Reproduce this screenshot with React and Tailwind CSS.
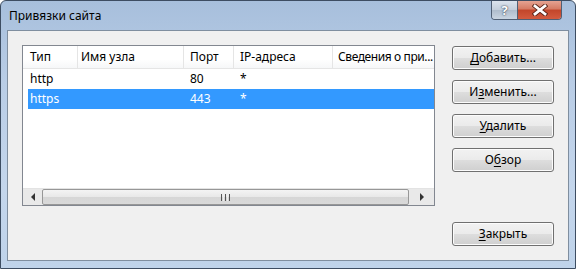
const font = { fontFamily: '"Noto Sans", "Open Sans", sans-serif' };

const cols = [
  { label: "Тип", w: "w-[55px]", pl: "pl-[7px]" },
  { label: "Имя узла", w: "w-[106px]", pl: "pl-[3px]" },
  { label: "Порт", w: "w-[50px]", pl: "pl-[6px]" },
  { label: "IP-адреса", w: "w-[99px]", pl: "pl-[6px]" },
  { label: "Сведения о при...", w: "w-[101px]", pl: "pl-[5px] tracking-[-0.4px]" },
];

const rows = [
  { type: "http", port: "80", ip: "*", selected: false },
  { type: "https", port: "443", ip: "*", selected: true },
];

const Btn = ({ pre, u, post, className = "" }) => (
  <button
    className={`h-[24px] w-[102px] rounded-[3px] border border-[#707070] bg-[linear-gradient(to_bottom,#f2f2f2_0%,#ebebeb_48%,#dddddd_52%,#cfcfcf_100%)] text-[12px] text-black shadow-[inset_0_0_0_1px_#fcfcfc] flex items-center justify-center ${className}`}
  >
    <span>
      {pre}
      <span className="underline underline-offset-2">{u}</span>
      {post}
    </span>
  </button>
);

const TitleBar = () => (
  <div className="h-[29px] flex items-start justify-between">
    <div className="pl-[8px] pt-[7px] text-[12px] text-black leading-[16px]">Привязки сайта</div>
    <div className="flex mr-[13px] border border-t-0 border-[#4f5f74] rounded-b-[4px] overflow-hidden h-[19px]">
      <div className="w-[26px] h-full bg-[linear-gradient(to_bottom,#dbe3ed_0%,#c3cedb_50%,#aebccc_51%,#c9d5e2_100%)] border-r border-[#4f5f74] flex items-center justify-center text-[13px] font-bold text-white [text-shadow:0_0_2px_#3d4a5c,0_0_1px_#3d4a5c] leading-none">
        ?
      </div>
      <div className="w-[43px] h-full bg-[linear-gradient(to_bottom,#e5a392_0%,#d47a63_45%,#c2452a_50%,#d35b3f_100%)] flex items-center justify-center">
        <svg width="16" height="12" viewBox="0 0 16 12">
          <path d="M3 2 L13 10 M13 2 L3 10" stroke="#5a2418" strokeWidth="4.6" strokeLinecap="square" />
          <path d="M3 2 L13 10 M13 2 L3 10" stroke="#ffffff" strokeWidth="2.8" strokeLinecap="square" />
        </svg>
      </div>
    </div>
  </div>
);

const Scrollbar = () => (
  <div className="h-[17px] flex bg-[#e9e9e9] border-t border-[#e3e3e3]">
    <div className="w-[19px] flex items-center justify-center">
      <div className="w-0 h-0 border-y-[4px] border-y-transparent border-r-[4px] border-r-[#333]" />
    </div>
    <div className="flex-1 rounded-[2px] border border-[#979797] bg-[linear-gradient(to_bottom,#f3f3f3_0%,#e8e8e8_50%,#d6d6d6_51%,#d9d9d9_100%)] flex items-center justify-center gap-[1px]">
      <div className="w-[1px] h-[7px] bg-[#555]" />
      <div className="w-[1px] h-[7px] bg-[#eee]" />
      <div className="w-[1px] h-[7px] bg-[#555]" />
      <div className="w-[1px] h-[7px] bg-[#eee]" />
      <div className="w-[1px] h-[7px] bg-[#555]" />
    </div>
    <div className="w-[25px] flex items-center justify-center">
      <div className="w-0 h-0 border-y-[4px] border-y-transparent border-l-[4px] border-l-[#333]" />
    </div>
  </div>
);

const ListView = () => (
  <div className="w-[413px] h-[161px] border border-[#828790] bg-white flex flex-col text-[12px] text-black">
    <div className="h-[23px] flex border-b border-[#e5e5e5] bg-[linear-gradient(to_bottom,#ffffff_0%,#ffffff_60%,#f6f7f8_100%)]">
      {cols.map((c, i) => (
        <div
          key={c.label}
          className={`${c.w} ${c.pl} shrink-0 flex items-center whitespace-nowrap overflow-hidden ${i < cols.length - 1 ? "border-r border-[#e5e5e5]" : ""}`}
        >
          {c.label}
        </div>
      ))}
    </div>
    <div className="flex-1 flex flex-col">
      {rows.map((r) => (
        <div
          key={r.type}
          className={`h-[20px] ml-[5px] flex items-center ${r.selected ? "bg-[#3399ff] text-white" : ""}`}
        >
          <div className="w-[156px] pl-[2px]">{r.type}</div>
          <div className="w-[50px] pl-[6px]">{r.port}</div>
          <div className="w-[99px] pl-[6px]">{r.ip}</div>
        </div>
      ))}
    </div>
    <Scrollbar />
  </div>
);

export default function App() {
  return (
    <div
      style={font}
      className="w-[576px] h-[269px] flex flex-col border border-[#3d4d62] rounded-t-[6px] bg-[linear-gradient(to_bottom,#a7bfdc_0%,#b9cde6_30%,#c4d6ec_70%,#bfd3ea_100%)] overflow-hidden"
    >
      <TitleBar />
      <div className="flex-1 flex flex-col px-[6px] pb-[7px]">
        <div className="flex-1 flex border border-[#7f8e9f] bg-[#f0f0f0] pl-[14px] pt-[14px] pr-[14px] pb-[14px]">
          <ListView />
          <div className="ml-[17px] mt-[1px] flex flex-col">
            <div className="flex flex-col gap-[10px]">
              <Btn pre="" u="Д" post="обавить..." />
              <Btn pre="И" u="з" post="менить..." />
              <Btn pre="" u="У" post="далить" />
              <Btn pre="О" u="б" post="зор" />
            </div>
            <Btn pre="" u="З" post="акрыть" className="mt-auto" />
          </div>
        </div>
      </div>
    </div>
  );
}
